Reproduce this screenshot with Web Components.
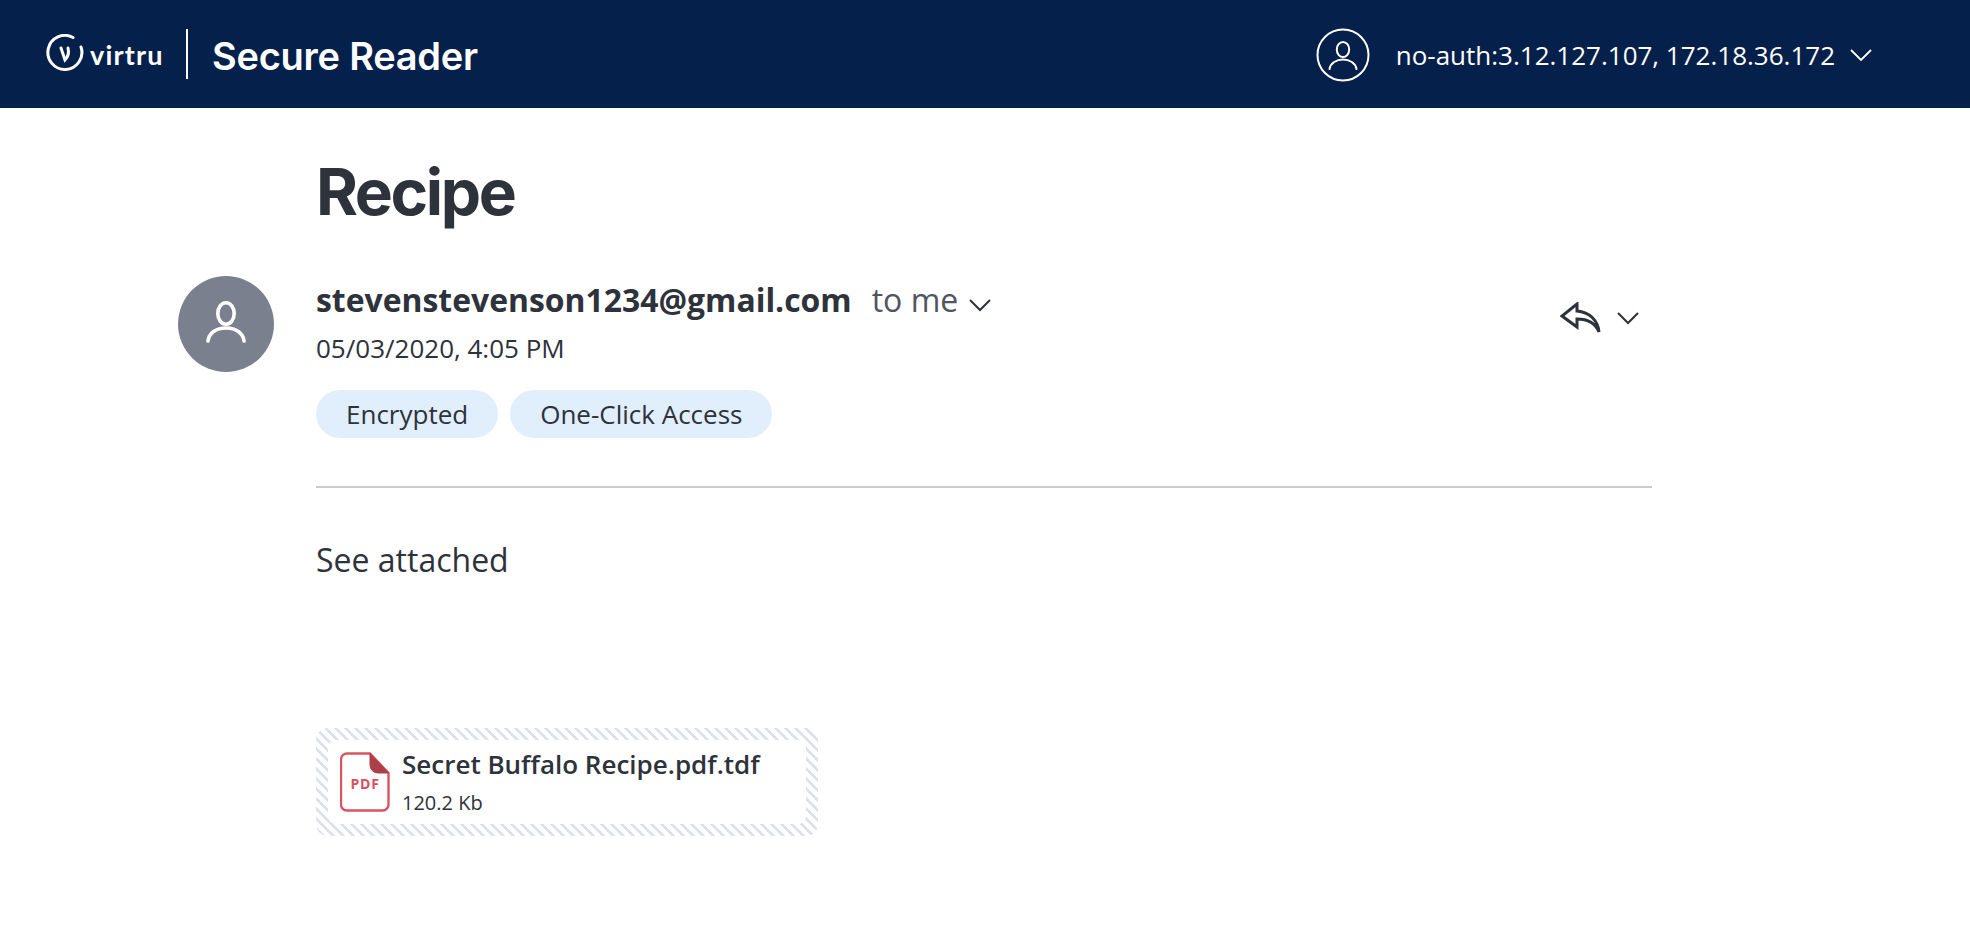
<!DOCTYPE html>
<html><head><meta charset="utf-8"><title>Secure Reader</title>
<style>html,body{margin:0;padding:0;background:#fff;font-family:"Open Sans",sans-serif;color:#2d323b}</style>
</head><body>
<template id="t-header"><style>
:host{display:flex;align-items:center;height:108px;background:#05204a;color:#fff;box-sizing:border-box;padding-left:46px}
.logo{display:flex;align-items:center;gap:6px;width:118px;}
.word{font:700 27px/1 "Lato",sans-serif;letter-spacing:1.200px}
.sep{width:2px;height:50px;background:#fff;margin:0 24px 0 22px}
.title{font:600 38px/1 "Inter",sans-serif;letter-spacing:-.25px;padding-top:3px}
.user{margin-left:auto;display:flex;align-items:center;margin-right:98px;padding-top:2px}
.txt{font-size:26px;margin:0 15px 0 26px}
svg{display:block}
</style>
<div class="logo"><svg width="38" height="40" viewBox="0 0 38 40" fill="none" stroke="#fff" stroke-linecap="round"><path d="M27 3.500A17 17 0 1 0 35 13" stroke-width="3"/><path d="M15 14l4 12c3-3 4-8 3-12" stroke-width="3"/></svg><span class="word">virtru</span></div>
<div class="sep"></div><div class="title">Secure Reader</div>
<div class="user"><svg width="54" height="54" viewBox="0 0 54 54" fill="none" stroke="#fff" stroke-width="2"><circle cx="27" cy="27" r="25.500"/><ellipse cx="27" cy="21.500" rx="6.200" ry="7.500"/><path d="M13.500 41c1-6 7-9.500 13.500-9.500S39.500 35 40.500 41" stroke-linecap="round"/></svg>
<span class="txt">no-auth:3.12.127.107, 172.18.36.172</span>
<svg width="22" height="12" viewBox="0 0 22 12" fill="none" stroke="#fff" stroke-width="1.800"><path d="M1 1l10 10L21 1"/></svg></div>
</template>

<template id="t-tag"><style>:host{display:inline-flex;align-items:center;height:48px;padding:0 30px;border-radius:24px;background:#e1eefc;font-size:26px;color:#2d323b}</style><slot></slot></template>

<template id="t-attachment"><style>
:host{display:block;box-sizing:border-box;width:502px;height:108px;padding:12px;border-radius:12px;background:repeating-linear-gradient(45deg,#fff 0 4px,#dfe2ea 4px 7.070px)}
.in{height:84px;background:#fff;border-radius:8px;box-sizing:border-box;display:flex;align-items:center;padding-left:12px;gap:12px}
.t{padding-bottom:3px}
.n{font-size:26px;font-weight:600;line-height:36px;white-space:nowrap}.s{font-size:20px;line-height:26px;margin-top:8px}
svg{display:block;flex:none}
text{font:700 14px "Open Sans",sans-serif;fill:#d9505c}
</style>
<div class="in"><svg width="50" height="60" viewBox="0 0 50 60" fill="none"><path d="M7 1.500H30L48.500 21V52A6 6 0 0 1 42.500 58.500H7A6 6 0 0 1 1 52V7.500A6 6 0 0 1 7 1.500Z" stroke="#d9545f" stroke-width="2.400"/><path d="M30 1.500L48.500 21H38A8 8 0 0 1 30 13Z" fill="#ab4049" stroke="#ab4049" stroke-linejoin="round"/><text x="25" y="37" text-anchor="middle" letter-spacing=".8">PDF</text></svg>
<div class="t"><div class="n"><slot name="name"></slot></div><div class="s"><slot name="size"></slot></div></div></div>
</template>

<template id="t-message"><style>
:host{display:flex;padding:0 0 0 178px}
.av{width:96px;height:96px;box-sizing:border-box;padding-bottom:4px;border-radius:50%;background:#7b808e;flex:none;margin-top:168px;display:flex;align-items:center;justify-content:center}
.col{width:1336px;margin-left:42px;position:relative}
h1{margin:0;height:168px;box-sizing:border-box;padding-top:47px;font:700 64px/74px "Inter",sans-serif;letter-spacing:-2.400px;color:#2d323b}
.top{display:flex;align-items:baseline}
.from{font-size:31.900px;font-weight:700;line-height:48px}
.to{font-size:32px;color:#4f5561;margin-left:20px}
.to svg{margin-left:10px}
.date{font-size:26px;line-height:36px;margin-top:6px}
.tags{display:flex;gap:12px;margin-top:24px}
.acts{position:absolute;right:12px;top:194px;display:flex;align-items:center;gap:14px}
hr{border:0;height:2px;background:#c9cad2;margin:48px 0 0}
.body{font-size:32px;line-height:44px;margin-top:50px}
.att{margin-top:146px}
</style>
<div class="av"><svg width="42" height="42" viewBox="0 0 42 42" fill="none" stroke="#fff" stroke-width="3.600" stroke-linecap="round"><ellipse cx="21" cy="12.500" rx="8.200" ry="10.700"/><path d="M3 40c1-8 8-13 18-13s17 5 18 13"/></svg></div>
<div class="col"><h1><slot name="subject"></slot></h1>
<div class="top"><span class="from"><slot name="from"></slot></span><span class="to">to me<svg width="24" height="14" viewBox="0 0 24 14" fill="none" stroke="#2d323b" stroke-width="2"><path d="M2 2l10 10L22 2"/></svg></span></div>
<div class="date"><slot name="date"></slot></div>
<div class="tags"><slot name="tags"></slot></div>
<div class="acts"><svg width="42" height="32" viewBox="0 0 42 32" fill="none" stroke="#2d323b" stroke-width="3"><path d="M17 2L2 14l15 11v-8c10 0 18 3 22 13-1-11-9-20-22-21Z"/></svg><svg width="24" height="14" viewBox="0 0 24 14" fill="none" stroke="#2d323b" stroke-width="2"><path d="M2 2l10 10L22 2"/></svg></div>
<hr><div class="body"><slot name="body"></slot></div>
<div class="att"><slot name="attachment"></slot></div></div>
</template>

<app-header></app-header>
<mail-message>
<span slot="subject">Recipe</span><span slot="from">stevenstevenson1234@gmail.com</span><span slot="date">05/03/2020, 4:05 PM</span>
<mail-tag slot="tags">Encrypted</mail-tag><mail-tag slot="tags">One-Click Access</mail-tag>
<span slot="body">See attached</span>
<mail-attachment slot="attachment"><span slot="name">Secret Buffalo Recipe.pdf.tdf</span><span slot="size">120.2 Kb</span></mail-attachment>
</mail-message>
<script>
for(const [n,t] of [['app-header','t-header'],['mail-tag','t-tag'],['mail-attachment','t-attachment'],['mail-message','t-message']]){
customElements.define(n,class extends HTMLElement{constructor(){super();this.attachShadow({mode:'open'}).append(document.getElementById(t).content.cloneNode(true))}})}
</script>
</body></html>
